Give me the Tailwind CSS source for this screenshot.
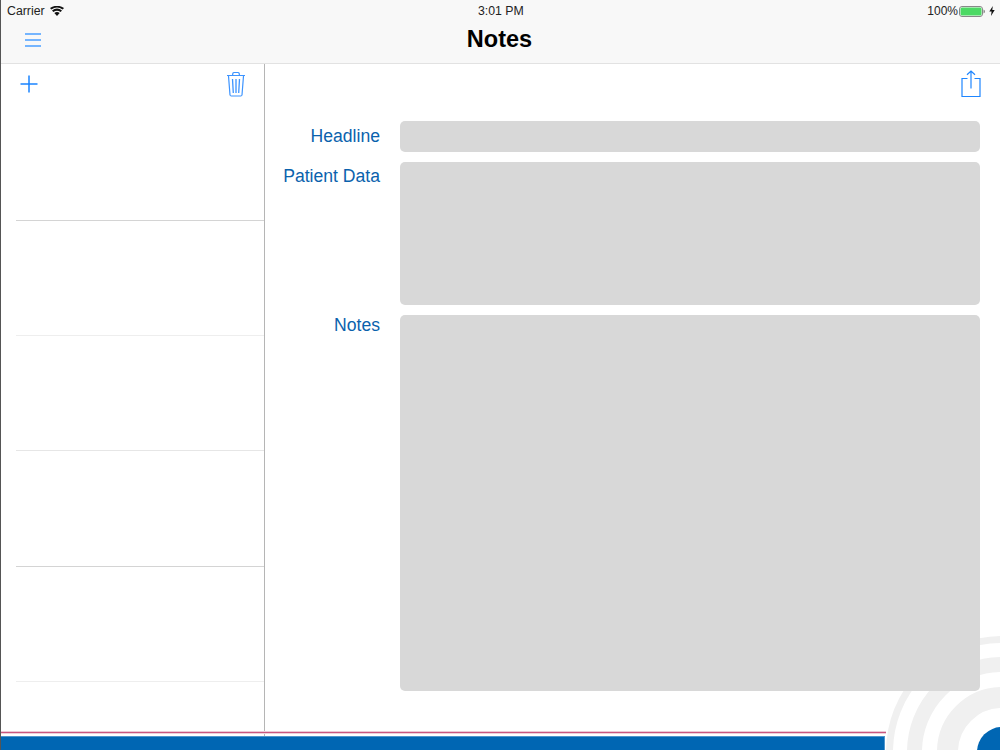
<!DOCTYPE html>
<html lang="en">
<head>
  <meta charset="UTF-8">
  <title>Notes</title>
  <script src="https://cdn.jsdelivr.net/npm/@tailwindcss/browser@4"></script>
</head>
<body class="bg-white">
  <div class="relative w-[1000px] h-[750px] overflow-hidden flex flex-col font-['Liberation_Sans',sans-serif] border-l border-l-[#555]">

    <!-- corner rings, behind the form -->
    <svg class="absolute right-0 bottom-0 pointer-events-none" width="120" height="120" viewBox="880 630 120 120" fill="none">
      <circle cx="1002" cy="752" r="112.500" stroke="#f0f0f0" stroke-width="7"/>
      <circle cx="1002" cy="752" r="87.500" stroke="#f0f0f0" stroke-width="15"/>
      <circle cx="1002" cy="752" r="54.500" stroke="#f0f0f0" stroke-width="21"/>
      <circle cx="1002" cy="752" r="25" fill="#0066b3"/>
    </svg>

    <!-- nav bar -->
    <header class="relative h-[64px] shrink-0 bg-[#f8f8f8] border-b border-[#e2e2e2] flex flex-col">
      <div class="h-[21px] flex items-center justify-between pl-[6px] pr-[5px] pt-[1px] text-[12.300px] text-[#222] relative">
        <div class="flex items-center gap-[5px]">
          <span>Carrier</span>
          <svg class="-mt-[1px]" width="14" height="10" viewBox="0 0 14 10"><path d="M7 10 L4.300 7 Q7 4.900 9.700 7 Z M3.400 6 L2 4.400 Q7 0.600 12 4.400 L10.600 6 Q7 3.500 3.400 6 Z M1.300 3.500 L0 2.100 Q7 -2.600 14 2.100 L12.700 3.500 Q7 -0.300 1.300 3.500 Z" fill="#111"/></svg>
        </div>
        <span class="absolute left-[477px] font-medium">3:01 PM</span>
        <div class="flex items-center">
          <span class="text-[12px]">100%</span>
          <svg class="ml-[1px]" width="26" height="11" viewBox="0 0 26 11"><rect x="0.500" y="0.500" width="23" height="10" rx="2.500" fill="none" stroke="#888"/><rect x="1.500" y="1.500" width="21" height="8" rx="1.500" fill="#4cd964"/><path d="M24.500 3.500 q1.500 .5 1.500 2 t-1.500 2 z" fill="#888"/></svg>
          <svg class="ml-[4px]" width="6" height="10" viewBox="0 0 6 10"><path d="M3.800 0 L0.300 5.600 H2.600 L2 10 L5.700 4 H3.300 Z" fill="#111"/></svg>
        </div>
      </div>
      <div class="relative flex-1 flex items-center justify-center pr-[2px]">
        <svg class="absolute left-[24px] top-[12px]" width="16" height="14" viewBox="0 0 16 14" stroke="#4a9fff" stroke-width="1.500"><path d="M0 1 H16 M0 7 H16 M0 13 H16"/></svg>
        <h1 class="text-[23.500px] font-bold text-black -mt-[5px]">Notes</h1>
      </div>
    </header>

    <div class="relative flex-1 flex min-h-0">
      <!-- note list -->
      <aside class="w-[264px] shrink-0 border-r border-[#b5b5b5] flex flex-col h-[672px]">
        <div class="h-[40px] shrink-0 flex items-center justify-between pl-[18px] pr-[18px]">
          <svg width="20" height="20" viewBox="0 0 20 20"><path d="M10 1.500 V18.500 M1.500 10 H18.500" stroke="#1a84ff" stroke-width="1.500"/></svg>
          <svg width="20" height="26" viewBox="0 0 20 26" fill="none" stroke="#3d94ff" stroke-width="1.200"><path d="M1 4.500 H19 M2.500 5 L4 24 Q4.200 25 5.200 25 H14.800 Q15.800 25 16 24 L17.500 5 M6.500 4 L7 2 Q7.200 1.500 8 1.500 H12 Q12.800 1.500 13 2 L13.500 4"/><path d="M6.500 8 L7.300 22 M10 8 V22 M13.500 8 L12.700 22" stroke-width="1.300"/></svg>
        </div>
        <ul class="pl-[15px] flex-1">
          <li class="h-[117px] border-b border-[#d4d4d4]"></li>
          <li class="h-[115px] border-b border-[#eeeeee]"></li>
          <li class="h-[115px] border-b border-[#e6e6e6]"></li>
          <li class="h-[116px] border-b border-[#d4d4d4]"></li>
          <li class="h-[115px] border-b border-[#eeeeee]"></li>
        </ul>
      </aside>

      <!-- detail -->
      <main class="flex-1 flex flex-col">
        <div class="h-[57px] shrink-0 flex justify-end pr-[19px] pt-[6px]">
          <svg width="20" height="28" viewBox="0 0 20 28" fill="none" stroke="#1f86ff" stroke-width="1.200"><path d="M6.500 8.500 H1 V26.500 H19 V8.500 H13.500"/><path d="M10 18.500 V1 M6 4.800 L10 1 L14 4.800"/></svg>
        </div>
        <div class="grid grid-cols-[115px_580px] gap-x-[20px] gap-y-[10px] items-start text-[17.600px] leading-[25px] text-[#0a62ad] text-right">
          <label class="pt-[3px]">Headline</label>
          <div class="h-[31px] rounded-[5px] bg-[#d8d8d8]"></div>
          <label class="pt-[2px]">Patient Data</label>
          <div class="h-[143px] rounded-[5px] bg-[#d8d8d8]"></div>
          <label class="-mt-[2px]">Notes</label>
          <div class="h-[376px] rounded-[5px] bg-[#d8d8d8]"></div>
        </div>
      </main>
    </div>

    <!-- footer stripes -->
    <div class="absolute left-0 top-[731px] w-[885px] flex flex-col">
      <div class="h-[1px] bg-[#eccad6]"></div>
      <div class="h-[1px] bg-[#c9567f]"></div>
      <div class="h-[1px] bg-[#ecd0da]"></div>
    </div>
    <div class="absolute left-0 bottom-0 w-[884px] h-[14px] bg-[#0066b3] border-t border-r border-[#4d94cc]"></div>
  </div>
</body>
</html>
